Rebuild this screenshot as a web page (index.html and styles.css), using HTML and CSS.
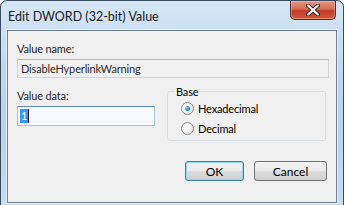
FILE: index.html
```html
<!DOCTYPE html>
<html lang="en">
<head>
  <meta charset="UTF-8">
  <title>Edit DWORD (32-bit) Value</title>
  <link rel="stylesheet" href="styles.css">
</head>
<body>

<div class="window">
  <div class="titlebar">
    <span class="title">Edit DWORD (32-bit) Value</span>
    <div class="close-btn">
      <svg width="16" height="12" viewBox="0 0 16 12">
        <path d="M3 1.5 L13 10.5 M13 1.5 L3 10.5" stroke="#3a1a1a" stroke-width="4" stroke-linecap="round"/>
        <path d="M3 1.5 L13 10.5 M13 1.5 L3 10.5" stroke="#ffffff" stroke-width="2.2" stroke-linecap="round"/>
      </svg>
    </div>
  </div>

  <div class="client">
    <label class="lbl">Value name:</label>
    <div class="field readonly">DisableHyperlinkWarning</div>

    <div class="row">
      <div class="data-col">
        <label class="lbl">Value data:</label>
        <div class="field data"><span class="sel">1</span><span class="caret"></span></div>
      </div>

      <fieldset class="group">
        <legend>Base</legend>
        <div class="radio-row">
          <span class="radio checked"></span>
          <span>Hexadecimal</span>
        </div>
        <div class="radio-row">
          <span class="radio"></span>
          <span>Decimal</span>
        </div>
      </fieldset>
    </div>

    <div class="buttons">
      <button class="btn default">OK</button>
      <button class="btn cancel">Cancel</button>
    </div>
  </div>
</div>

</body>
</html>
```

FILE: styles.css
```css
body {
  margin: 0;
  padding: 0;
  background: #ffffff;
  font-family: Lato, 'Liberation Sans', sans-serif;
  font-size: 11px;
  letter-spacing: -0.15px;
  color: #000;
}

.window {
  width: 330px;
  height: 202px;
  border: 1px solid #3b4a5c;
  border-radius: 7px 7px 4px 4px;
  background: linear-gradient(180deg, #d6e6f7 0%, #c2d8ef 30%, #b9d1ec 60%, #c7dcf2 100%);
  display: flex;
  flex-direction: column;
  padding: 0 6px 6px 6px;
}

.titlebar {
  height: 29px;
  display: flex;
  align-items: flex-start;
  justify-content: space-between;
}

.title {
  margin-top: 8px;
  margin-left: 1px;
  font-size: 12.5px;
  letter-spacing: 0;
  color: #1a1a1a;
}

.close-btn {
  width: 44px;
  height: 18px;
  margin-right: 1px;
  border: 1px solid #5a2a22;
  border-top: none;
  border-radius: 0 0 5px 5px;
  background: linear-gradient(180deg, #e49a85 0%, #d66a50 45%, #c13a24 55%, #cf5c3f 100%);
  display: flex;
  align-items: center;
  justify-content: center;
  box-shadow: inset 0 0 0 1px rgba(255, 200, 180, 0.45);
}

.client {
  flex: 1;
  background: #f0f0f0;
  border: 1px solid #6e7f92;
  box-shadow: 0 0 0 1px #e6eef8;
  padding: 10px 8px 0 9px;
  display: flex;
  flex-direction: column;
}

.lbl {
  display: block;
  line-height: 15px;
  color: #1e1e1e;
}

.field {
  height: 19px;
  box-sizing: border-box;
  line-height: 17px;
  padding-left: 3px;
}

.readonly {
  margin-top: 3px;
  width: 312px;
  border: 1px solid #d4d4d4;
  border-top-color: #b9b9b9;
  background: #f0f0f0;
  color: #2a2a2a;
}

.row {
  display: flex;
  margin-top: 8px;
}

.data-col {
  width: 150px;
  padding-top: 2px;
}

.data {
  margin-top: 3px;
  width: 138px;
  height: 20px;
  border: 1px solid #a9c4dd;
  border-top-color: #5d8bb3;
  background: #f7f9ff;
  display: flex;
  align-items: center;
  padding-left: 2px;
}

.sel {
  background: #3399ff;
  color: #fff;
  line-height: 14px;
  padding: 0 1px;
}

.caret {
  width: 1px;
  height: 14px;
  background: #000;
}

.group {
  margin: -1px 0 0 0;
  width: 159px;
  height: 56px;
  box-sizing: border-box;
  border: 1px solid #d5dfe5;
  border-radius: 3px;
  padding: 0 0 0 13px;
}

.group legend {
  padding: 0 1px;
  margin-left: -6px;
  line-height: 13px;
}

.radio-row {
  display: flex;
  align-items: center;
  gap: 4px;
  height: 20px;
}

.radio {
  width: 11px;
  height: 11px;
  border-radius: 50%;
  border: 1px solid #8a8a8a;
  background: radial-gradient(circle at 40% 35%, #ffffff 0%, #f0f0f0 50%, #d2d2d2 100%);
  display: flex;
  align-items: center;
  justify-content: center;
}

.radio.checked::after {
  content: "";
  width: 5px;
  height: 5px;
  border-radius: 50%;
  background: radial-gradient(circle at 35% 35%, #7fd4ff 0%, #1f86c5 60%, #0d4f7f 100%);
}

.buttons {
  display: flex;
  justify-content: flex-end;
  gap: 10px;
  margin-top: 20px;
  padding-right: 1px;
}

.btn {
  height: 20px;
  font-family: inherit;
  font-size: 12px;
  letter-spacing: 0;
  border: 1px solid #707070;
  border-radius: 3px;
  background: linear-gradient(180deg, #f2f2f2 0%, #ebebeb 48%, #dddddd 52%, #cfcfcf 100%);
  padding: 0;
  color: #000;
}

.btn.default {
  width: 59px;
  border-color: #3c7fb1;
  box-shadow: inset 0 0 0 1px #8ed4f5;
}

.btn.cancel {
  width: 73px;
}
```
